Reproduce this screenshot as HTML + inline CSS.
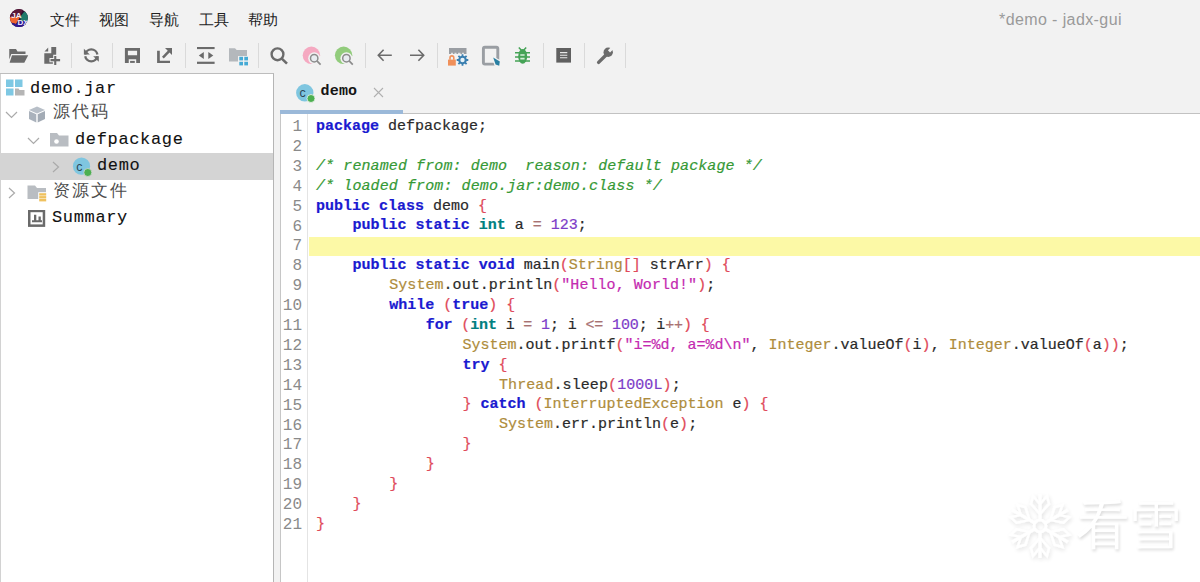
<!DOCTYPE html>
<html><head><meta charset="utf-8">
<style>
*{margin:0;padding:0;box-sizing:border-box}
html,body{width:1200px;height:582px;overflow:hidden;background:#f2f2f2;font-family:"Liberation Sans",sans-serif;position:relative}
.abs{position:absolute}
#menu span{position:absolute;top:10px;font-size:15px;color:#222;line-height:20px}
#title{position:absolute;left:999px;top:10px;font-size:16px;letter-spacing:0.4px;color:#9a9a9a;line-height:20px}
.sep{position:absolute;top:43px;width:1px;height:25px;background:#dadada}
.ic{position:absolute}
#left{position:absolute;left:0;top:73px;width:274px;height:509px;background:#fff;border-right:1px solid #b5b5b5;border-top:1px solid #bdbdbd}
.row{position:absolute;left:0;width:273px;height:26px;font-size:17px;line-height:26px;color:#111}
.mono{font-family:"Liberation Mono",monospace}
.tx{position:absolute;height:26px;line-height:28px;font-size:17px;letter-spacing:0.65px;color:#111;white-space:pre;-webkit-text-stroke:0.1px currentColor}
.cjk{font-size:17px;letter-spacing:2.0px;color:#4c4c4c;line-height:26px;-webkit-text-stroke:0}
#editor{position:absolute;left:280px;top:114px;width:920px;height:468px;background:#fff;border-left:1px solid #c6c6c6}
#gutter{position:absolute;left:0;top:0;width:27px;height:469px;border-right:1px solid #e4e4e4}
.ln{position:absolute;right:5px;width:30px;text-align:right;font-family:"Liberation Mono",monospace;font-size:16px;line-height:20px;color:#8a8a8a}
#code{position:absolute;left:35px;top:3px;font-family:"Liberation Mono",monospace;font-size:15px;line-height:20px;color:#2a2a2a;white-space:pre;-webkit-text-stroke:0.2px currentColor}
#code div{height:19.9px}
.ind{letter-spacing:0.15px}
.k{color:#1a1ad0;font-weight:bold}
.t{color:#008080;font-weight:bold}
.c{color:#359935;font-style:italic;letter-spacing:0.1px}
.n{color:#7d3cc8}
.s{color:#c42ab0}
.o{color:#a87272}
.b{color:#e04a5a}
.cl{color:#ae8c3c}
#hl{position:absolute;left:28px;top:123px;width:892px;height:19px;background:#fcf9a6}
</style></head><body>
<!-- menu -->
<div id="menu">
<svg class="abs" style="left:9px;top:8px" width="20" height="20" viewBox="0 0 20 20">
<defs><clipPath id="lc"><circle cx="9.9" cy="10.1" r="9"/></clipPath></defs>
<g clip-path="url(#lc)">
<rect x="0" y="0" width="20" height="20" fill="#2a1030"/>
<path d="M0 0 H15 L10 10 H0 Z" fill="#5a1838"/>
<path d="M0 9 H11 L7 16 L0 14 Z" fill="#ee6430"/>
<path d="M11 9 L15 4 H20 V13 H12 Z" fill="#1f7a6a"/>
<path d="M0 14 L7 16 L11 13 H20 V20 H0 Z" fill="#2e1890"/>
<text x="2.2" y="10.2" font-family="Liberation Sans" font-weight="bold" font-size="8" fill="#f4eef4">JA</text>
<text x="8.6" y="17.2" font-family="Liberation Sans" font-weight="bold" font-size="8" fill="#eeeaff">DX</text>
</g>
</svg>
<span style="left:50px">文件</span>
<span style="left:99px">视图</span>
<span style="left:149px">导航</span>
<span style="left:199px">工具</span>
<span style="left:248px">帮助</span>
</div>
<div id="title">*demo - jadx-gui</div>

<svg class="abs" style="left:0;top:38px" width="640" height="36" viewBox="0 38 640 36">
<g fill="#6b6b6b">
<!-- open folder -->
<path d="M9.25 49 H16 L17.5 51.5 H25.5 V54 H11.3 L9.25 59.5 Z"/>
<path d="M12 55.3 H28.2 L24.3 62.8 H9.6 Z"/>
<!-- add file -->
<path d="M44.5 51.6 L48.2 47.6 V51.6 Z"/>
<path d="M51.3 47.1 H56.2 V54.8 H53.2 V58 H49.5 V62.3 H52.9 V63.8 H44.3 V53.3 H51.3 Z"/>
<rect x="50.5" y="59" width="9.6" height="2.3"/>
<rect x="54.2" y="56" width="2.1" height="9"/>
<!-- save -->
<path d="M124.9 48 H140 V62.9 H136.2 V59.3 H128.75 V62.9 H124.9 Z M127.9 50.75 V55.3 H137.1 V50.75 Z" fill-rule="evenodd"/>
<rect x="130.1" y="60.9" width="4.7" height="2"/>
<!-- export -->
<path d="M157.1 50.75 H159.8 V60.7 H170 V62.9 H157.1 Z"/>
<path d="M165 48 H172 V55 Z"/>
<!-- top/bottom bars + triangles -->
<rect x="197" y="47" width="17.6" height="2.1"/>
<rect x="197" y="61.7" width="17.6" height="2.2"/>
<path d="M198.8 55.5 L203.8 51.9 V59.1 Z"/>
<path d="M213.3 55.5 L208.3 51.9 V59.1 Z"/>
</g>
<g fill="none" stroke="#6b6b6b">
<path d="M162.9 57.6 L169.6 50.6" stroke-width="2.5"/>
<!-- refresh -->
<path d="M85.2 54.5 A6.2 6.2 0 0 1 97.4 54.5" stroke-width="2.3"/>
<path d="M97.4 56.3 A6.2 6.2 0 0 1 85.2 56.3" stroke-width="2.3"/>
<!-- search -->
<circle cx="277.5" cy="54.3" r="5.9" stroke-width="2.4"/>
<path d="M281.8 58.6 L287 63.6" stroke-width="2.6"/>
<!-- arrows -->
<path d="M391.8 55.3 H378.5 M383.6 49.8 L378.3 55.3 L383.6 60.8" stroke-width="1.6"/>
<path d="M410 55.3 H423.5 M418.4 49.8 L423.7 55.3 L418.4 60.8" stroke-width="1.6"/>
</g>
<g fill="#6b6b6b">
<path d="M83.9 48.7 V54.6 H89.8 Z"/>
<path d="M98.8 61.7 V56.3 H93.2 Z"/>
</g>
<!-- folder grid -->
<path d="M229 48.3 H235 L236.7 50 H247 V61.6 H229 Z" fill="#b4b8bc"/>
<rect x="238" y="56" width="11" height="10" fill="#f2f2f2"/>
<g fill="#45aad5"><rect x="239.3" y="56.8" width="3.7" height="3.6"/><rect x="244.3" y="56.8" width="3.7" height="3.6"/><rect x="239.3" y="61.8" width="3.7" height="3.6"/><rect x="244.3" y="61.8" width="3.7" height="3.6"/></g>
<!-- pink / green search -->
<circle cx="311.4" cy="55.3" r="8.7" fill="#f5a9c1"/>
<circle cx="314.2" cy="58.2" r="6" fill="#f2f2f2"/>
<circle cx="314.2" cy="58.2" r="3.7" fill="#e8ecf0" stroke="#8c8c8c" stroke-width="1.5"/>
<path d="M316.9 60.9 L320.6 64.6" stroke="#8c8c8c" stroke-width="1.7"/>
<circle cx="343.6" cy="55.3" r="8.7" fill="#92cc7c"/>
<circle cx="346.4" cy="58.2" r="6" fill="#f2f2f2"/>
<circle cx="346.4" cy="58.2" r="3.7" fill="#e8ecf0" stroke="#8c8c8c" stroke-width="1.5"/>
<path d="M349.1 60.9 L352.8 64.6" stroke="#8c8c8c" stroke-width="1.7"/>
<!-- lock gear -->
<rect x="449" y="48" width="17.5" height="6" fill="#9a9ea3"/>
<path d="M451 53.3 h2 M454.5 53.3 h2 M458 53.3 h2.5 M462 53.3 h2" stroke="#f2f2f2" stroke-width="1"/>
<path d="M450 59.8 V57.8 A1.9 1.9 0 0 1 453.8 57.8 V59.8" fill="none" stroke="#f0905a" stroke-width="1.6"/>
<rect x="448" y="59.6" width="7.8" height="6" fill="#f0905a"/>
<g transform="translate(462.5 60)"><circle r="4.3" fill="#3a7fb0"/>
<path d="M0 -5.8 V5.8 M-5.8 0 H5.8 M-4.1 -4.1 L4.1 4.1 M4.1 -4.1 L-4.1 4.1" stroke="#3a7fb0" stroke-width="1.8"/>
<circle r="2.2" fill="#e6f2f8"/></g>
<!-- frame pointer -->
<rect x="483.4" y="47.2" width="14.4" height="16.9" rx="1.5" fill="none" stroke="#9a9ea3" stroke-width="2.9"/>
<path d="M492.5 56.8 L500.8 61.2 L500.2 67 L495 65.2 Z" fill="#f2f2f2" stroke="#f2f2f2" stroke-width="1.2"/>
<path d="M493.2 57.6 L499.8 61.6 L499.2 65.8 L495.6 64.4 Z" fill="#2a80a3"/>
<!-- bug -->
<g stroke="#45a356" stroke-width="1.5">
<path d="M515 52.8 H530 M515 56.9 H530 M515 61 H530 M518.8 47.4 L521.4 50.2 M526.2 47.4 L523.6 50.2"/></g>
<ellipse cx="522.7" cy="56.3" rx="4.5" ry="7.4" fill="#45a356"/>
<path d="M520.3 55 H524.6 M520.3 58.7 H524.6" stroke="#d4f0d8" stroke-width="1.7"/>
<!-- doc -->
<rect x="556.3" y="48" width="14.7" height="14.6" fill="#606060"/>
<path d="M560 52.6 H567.3 M560 55.2 H567.3 M560 57.8 H567.3" stroke="#e8e8e8" stroke-width="1.1"/>
<!-- wrench -->
<path d="M598.6 62.4 L605.8 55.2" stroke="#6b6b6b" stroke-width="3.4" stroke-linecap="round"/>
<circle cx="608.2" cy="52.2" r="4.7" fill="#6b6b6b"/>
<path d="M609 51.4 L614.5 45.9" stroke="#f2f2f2" stroke-width="3"/>
</svg>
<!-- toolbar separators -->
<div class="sep" style="left:71px"></div>
<div class="sep" style="left:112px"></div>
<div class="sep" style="left:185px"></div>
<div class="sep" style="left:258px"></div>
<div class="sep" style="left:365px"></div>
<div class="sep" style="left:437px"></div>
<div class="sep" style="left:543px"></div>
<div class="sep" style="left:584px"></div>
<div class="sep" style="left:625px"></div>

<!-- left tree -->
<div id="left">
<div class="abs" style="left:0;top:0;width:1px;height:509px;background:#d2d2d2"></div>
<div class="abs" style="left:0;top:79px;width:273px;height:26.6px;background:#d4d4d4"></div>
<svg class="abs" style="left:6px;top:5px" width="19" height="17" viewBox="0 0 19 17">
<rect x="0" y="0.5" width="7.5" height="7.5" fill="#7ec8e3"/><rect x="9" y="0.5" width="7.5" height="7.5" fill="#7ec8e3"/>
<rect x="0" y="9.5" width="7.5" height="7" fill="#7ec8e3"/><path d="M9 9.5h3.5l1 1.5h5v5.5h-9.5z" fill="#b5b5b5"/>
</svg>
<div class="tx mono" style="left:30px;top:1px">demo.jar</div>
<svg class="abs" style="left:5px;top:37px" width="13" height="8" viewBox="0 0 13 8"><path d="M1 1 L6.5 6.5 L12 1" fill="none" stroke="#aaaaaa" stroke-width="1.2"/></svg>
<svg class="abs" style="left:28px;top:32px" width="18" height="17" viewBox="0 0 18 17">
<path d="M9 0.5 L17 4 L9 7.5 L1 4 Z" fill="#b8bfc8"/><path d="M1 5 L8.3 8.3 L8.3 16.5 L1 13 Z" fill="#aab2bc"/><path d="M17 5 L9.7 8.3 L9.7 16.5 L17 13 Z" fill="#a3abb5"/>
</svg>
<div class="tx cjk" style="left:53px;top:25px">源代码</div>
<svg class="abs" style="left:27px;top:62.5px" width="13" height="8" viewBox="0 0 13 8"><path d="M1 1 L6.5 6.5 L12 1" fill="none" stroke="#aaaaaa" stroke-width="1.2"/></svg>
<svg class="abs" style="left:50px;top:59px" width="19" height="14" viewBox="0 0 19 14">
<path d="M0 0 H7 L9 2.5 H18.5 V13.5 H0 Z" fill="#b9bdc2"/><circle cx="6.5" cy="8.5" r="2.3" fill="#fff"/>
</svg>
<div class="tx mono" style="left:75px;top:52px">defpackage</div>
<svg class="abs" style="left:52px;top:87px" width="8" height="12" viewBox="0 0 8 12"><path d="M1 1 L6.5 6 L1 11" fill="none" stroke="#aaaaaa" stroke-width="1.2"/></svg>
<svg class="abs" style="left:72px;top:83px" width="21" height="21" viewBox="0 0 21 21">
<circle cx="9.5" cy="9.2" r="8.6" fill="#7fc6e0"/><text x="4.3" y="13.6" font-family="Liberation Sans" font-size="12.5" fill="#2d4757">c</text><circle cx="15.8" cy="15.5" r="4" fill="#4caf50" stroke="#d5d5d5" stroke-width="0.8"/>
</svg>
<div class="tx mono" style="left:97px;top:78px">demo</div>
<svg class="abs" style="left:8px;top:113px" width="8" height="12" viewBox="0 0 8 12"><path d="M1 1 L6.5 6 L1 11" fill="none" stroke="#aaaaaa" stroke-width="1.2"/></svg>
<svg class="abs" style="left:27px;top:111px" width="21" height="18" viewBox="0 0 21 18">
<path d="M0.5 0.5 H8 L10 3 H19 V14 H0.5 Z" fill="#b9bdc2"/><rect x="11.2" y="7.2" width="9" height="10.2" fill="#fff"/>
<rect x="12.2" y="8.2" width="7" height="2.4" fill="#efc15e"/><rect x="12.2" y="11.1" width="7" height="2.4" fill="#efc15e"/><rect x="12.2" y="14" width="7" height="2.4" fill="#efc15e"/>
</svg>
<div class="tx cjk" style="left:53px;top:103.5px">资源文件</div>
<svg class="abs" style="left:27px;top:136px" width="20" height="18" viewBox="0 0 20 18">
<rect x="2.25" y="0.95" width="14.7" height="14.7" fill="none" stroke="#6a6a6a" stroke-width="2.5"/>
<path d="M5 10.3 H7 V4.8 H9.3 V10.3 H11.5 V6.5 H13.8 V10.3 H15 V12.2 H5 Z" fill="#6a6a6a"/>
</svg>
<div class="tx mono" style="left:52px;top:130px">Summary</div>
</div>

<!-- tabs -->
<div id="tabs">
<svg class="abs" style="left:295px;top:83px" width="22" height="21" viewBox="0 0 22 21">
<circle cx="9.8" cy="9.8" r="8.7" fill="#7fc6e0"/><text x="4.6" y="14.2" font-family="Liberation Sans" font-size="12.5" fill="#2d4757">c</text><circle cx="16" cy="15.5" r="4" fill="#4caf50" stroke="#f2f2f2" stroke-width="0.8"/>
</svg>
<div class="abs mono" style="left:320.5px;top:82px;font-size:15px;letter-spacing:0.2px;font-weight:bold;line-height:20px;color:#151515">demo</div>
<svg class="abs" style="left:373px;top:87px" width="11" height="11" viewBox="0 0 11 11"><path d="M1 1 L10 10 M10 1 L1 10" stroke="#b0b0b0" stroke-width="1.1"/></svg>
<div class="abs" style="left:280px;top:110px;width:123px;height:4px;background:#9bb9d9"></div>
<div class="abs" style="left:403px;top:113px;width:797px;height:1px;background:#c2c2c2"></div><div class="abs" style="left:403px;top:114px;width:797px;height:1px;background:#e2e2e2"></div>
</div>

<!-- editor -->
<div id="editor">
<div id="hl"></div><div id="gutter"><div class="ln" style="top:3.00px">1</div><div class="ln" style="top:22.90px">2</div><div class="ln" style="top:42.80px">3</div><div class="ln" style="top:62.70px">4</div><div class="ln" style="top:82.60px">5</div><div class="ln" style="top:102.50px">6</div><div class="ln" style="top:122.40px">7</div><div class="ln" style="top:142.30px">8</div><div class="ln" style="top:162.20px">9</div><div class="ln" style="top:182.10px">10</div><div class="ln" style="top:202.00px">11</div><div class="ln" style="top:221.90px">12</div><div class="ln" style="top:241.80px">13</div><div class="ln" style="top:261.70px">14</div><div class="ln" style="top:281.60px">15</div><div class="ln" style="top:301.50px">16</div><div class="ln" style="top:321.40px">17</div><div class="ln" style="top:341.30px">18</div><div class="ln" style="top:361.20px">19</div><div class="ln" style="top:381.10px">20</div><div class="ln" style="top:401.00px">21</div></div>
<div id="code"><div><span class="k">package</span> defpackage;</div><div></div><div><span class="c">/* renamed from: demo  reason: default package */</span></div><div><span class="c">/* loaded from: demo.jar:demo.class */</span></div><div><span class="k">public class</span> demo <span class="b">{</span></div><div><span class="ind">    </span><span class="k">public static</span> <span class="t">int</span> a <span class="o">=</span> <span class="n">123</span>;</div><div></div><div><span class="ind">    </span><span class="k">public static void</span> main<span class="b">(</span><span class="cl">String</span><span class="b">[]</span> strArr<span class="b">)</span> <span class="b">{</span></div><div style="letter-spacing:0.055px"><span class="ind">        </span><span class="cl">System</span>.out.println<span class="b">(</span><span class="s">"Hello, World!"</span><span class="b">)</span>;</div><div><span class="ind">        </span><span class="k">while</span> <span class="b">(</span><span class="k">true</span><span class="b">)</span> <span class="b">{</span></div><div style="letter-spacing:-0.14px"><span class="ind">            </span><span class="k">for</span> <span class="b">(</span><span class="t">int</span> i <span class="o">=</span> <span class="n">1</span>; i <span class="o">&lt;=</span> <span class="n">100</span>; i<span class="o">++</span><span class="b">)</span> <span class="b">{</span></div><div><span class="ind">                </span><span class="cl">System</span>.out.printf<span class="b">(</span><span class="s">"i=%d, a=%d\n"</span>, <span class="cl">Integer</span>.valueOf<span class="b">(</span>i<span class="b">)</span>, <span class="cl">Integer</span>.valueOf<span class="b">(</span>a<span class="b">))</span>;</div><div><span class="ind">                </span><span class="k">try</span> <span class="b">{</span></div><div style="letter-spacing:0.08px"><span class="ind">                    </span><span class="cl">Thread</span>.sleep<span class="b">(</span><span class="n">1000L</span><span class="b">)</span>;</div><div><span class="ind">                </span><span class="b">}</span> <span class="k">catch</span> <span class="b">(</span><span class="cl">InterruptedException</span> e<span class="b">)</span> <span class="b">{</span></div><div><span class="ind">                    </span><span class="cl">System</span>.err.println<span class="b">(</span>e<span class="b">)</span>;</div><div><span class="ind">                </span><span class="b">}</span></div><div><span class="ind">            </span><span class="b">}</span></div><div><span class="ind">        </span><span class="b">}</span></div><div><span class="ind">    </span><span class="b">}</span></div><div><span class="b">}</span></div></div>
</div>
<!-- watermark -->
<svg class="abs" style="left:1000px;top:485px" width="80" height="82" viewBox="-40 -41 80 82">
<defs><filter id="sh" x="-30%" y="-30%" width="160%" height="160%"><feGaussianBlur in="SourceAlpha" stdDeviation="2"/><feOffset dx="1" dy="2"/><feComponentTransfer><feFuncA type="linear" slope="0.13"/></feComponentTransfer><feMerge><feMergeNode/><feMergeNode in="SourceGraphic"/></feMerge></filter></defs>
<g filter="url(#sh)" fill="#fff" stroke="#fff">
<g id="arm" stroke-width="3" fill="none">
<path d="M0 -6 V-32"/><path d="M0 -12 L-9 -22 L-7 -30 L0 -22 M0 -12 L9 -22 L7 -30 L0 -22" stroke-width="2.2"/>
</g>
<use href="#arm" transform="rotate(60)"/><use href="#arm" transform="rotate(120)"/><use href="#arm" transform="rotate(180)"/><use href="#arm" transform="rotate(240)"/><use href="#arm" transform="rotate(300)"/>
<circle r="6" stroke-width="2.5" fill="none"/>
</g>
</svg>
<div class="abs" style="left:1076px;top:491px;font-size:53px;line-height:68px;color:#fff;text-shadow:1px 2px 3px rgba(0,0,0,0.14);letter-spacing:-1px;font-weight:300">看雪</div>
</body></html>
